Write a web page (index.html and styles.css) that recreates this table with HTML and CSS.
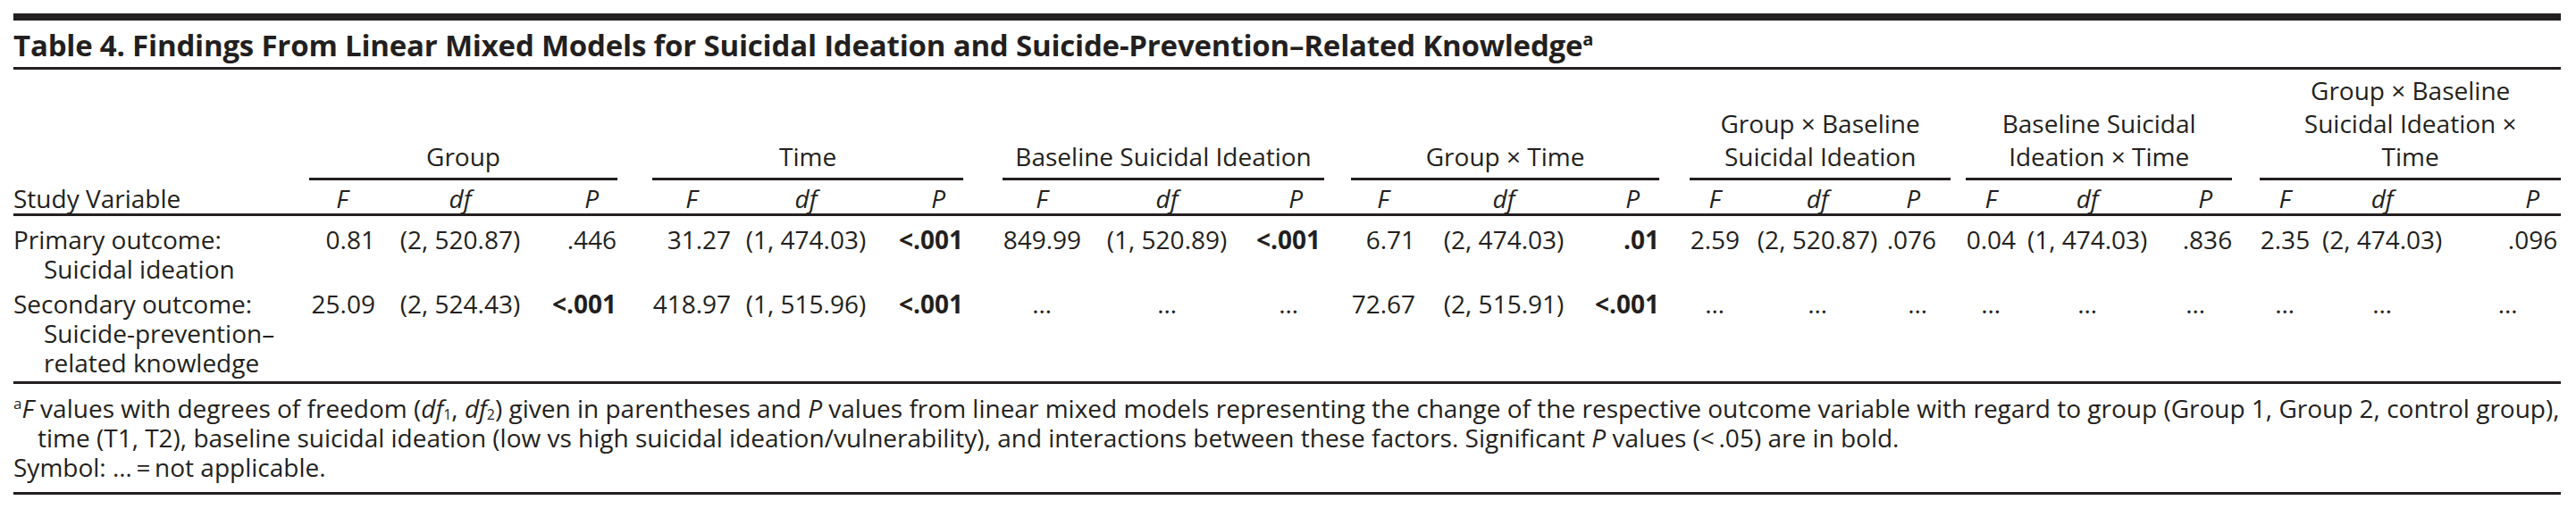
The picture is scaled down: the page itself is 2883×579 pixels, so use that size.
FILE: index.html
```html
<!DOCTYPE html>
<html lang="en">
<head>
<meta charset="utf-8">
<title>Table 4</title>
<link rel="stylesheet" href="styles.css">
</head>
<body>
<div class="table-wrap">
  <div class="topbar"></div>
  <h1 class="title">Table 4. Findings From Linear Mixed Models for Suicidal Ideation and Suicide-Prevention–Related Knowledge<sup>a</sup></h1>
  <table class="data">
    <colgroup>
      <col class="c-var">
      <col class="c-f1"><col class="c-d1"><col class="c-p1"><col class="c-g1">
      <col class="c-f2"><col class="c-d2"><col class="c-p2"><col class="c-g2">
      <col class="c-f3"><col class="c-d3"><col class="c-p3"><col class="c-g3">
      <col class="c-f4"><col class="c-d4"><col class="c-p4"><col class="c-g4">
      <col class="c-f5"><col class="c-d5"><col class="c-p5"><col class="c-g5">
      <col class="c-f6"><col class="c-d6"><col class="c-p6"><col class="c-g6">
      <col class="c-f7"><col class="c-d7"><col class="c-p7">
    </colgroup>
    <thead>
      <tr class="grp-row">
        <th class="var-h"></th>
        <th colspan="3" class="grp"><div class="grp-in">Group</div></th><th class="sp"></th>
        <th colspan="3" class="grp"><div class="grp-in">Time</div></th><th class="sp"></th>
        <th colspan="3" class="grp"><div class="grp-in">Baseline Suicidal Ideation</div></th><th class="sp"></th>
        <th colspan="3" class="grp"><div class="grp-in">Group × Time</div></th><th class="sp"></th>
        <th colspan="3" class="grp"><div class="grp-in">Group × Baseline<br>Suicidal Ideation</div></th><th class="sp"></th>
        <th colspan="3" class="grp"><div class="grp-in">Baseline Suicidal<br>Ideation × Time</div></th><th class="sp"></th>
        <th colspan="3" class="grp"><div class="grp-in">Group × Baseline<br>Suicidal Ideation ×<br>Time</div></th>
      </tr>
      <tr class="sub-row">
        <th class="var-h">Study Variable</th>
        <th><i>F</i></th><th><i>df</i></th><th class="ph ph1"><i>P</i></th><th class="sp"></th>
        <th><i>F</i></th><th><i>df</i></th><th class="ph ph2"><i>P</i></th><th class="sp"></th>
        <th><i>F</i></th><th><i>df</i></th><th class="ph ph3"><i>P</i></th><th class="sp"></th>
        <th><i>F</i></th><th><i>df</i></th><th class="ph ph4"><i>P</i></th><th class="sp"></th>
        <th><i>F</i></th><th class="dh5"><i>df</i></th><th class="ph ph5"><i>P</i></th><th class="sp"></th>
        <th><i>F</i></th><th><i>df</i></th><th class="ph ph6"><i>P</i></th><th class="sp"></th>
        <th><i>F</i></th><th><i>df</i></th><th class="ph ph7"><i>P</i></th>
      </tr>
    </thead>
    <tbody>
      <tr class="r1">
        <td class="var"><span class="lead">Primary outcome:</span><span class="sub">Suicidal ideation</span></td>
        <td class="f">0.81</td><td class="d">(2, 520.87)</td><td class="p p1">.446</td><td class="sp"></td>
        <td class="f">31.27</td><td class="d">(1, 474.03)</td><td class="p p2"><b>&lt;.001</b></td><td class="sp"></td>
        <td class="f">849.99</td><td class="d">(1, 520.89)</td><td class="p p3"><b>&lt;.001</b></td><td class="sp"></td>
        <td class="f">6.71</td><td class="d">(2, 474.03)</td><td class="p p4"><b>.01</b></td><td class="sp"></td>
        <td class="f">2.59</td><td class="d d5">(2, 520.87)</td><td class="p p5">.076</td><td class="sp"></td>
        <td class="f">0.04</td><td class="d">(1, 474.03)</td><td class="p p6">.836</td><td class="sp"></td>
        <td class="f">2.35</td><td class="d">(2, 474.03)</td><td class="p p7">.096</td>
      </tr>
      <tr class="r2">
        <td class="var"><span class="lead">Secondary outcome:</span><span class="sub">Suicide-prevention–</span><span class="sub">related knowledge</span></td>
        <td class="f">25.09</td><td class="d">(2, 524.43)</td><td class="p p1"><b>&lt;.001</b></td><td class="sp"></td>
        <td class="f">418.97</td><td class="d">(1, 515.96)</td><td class="p p2"><b>&lt;.001</b></td><td class="sp"></td>
        <td class="na">…</td><td class="na">…</td><td class="na">…</td><td class="sp"></td>
        <td class="f">72.67</td><td class="d">(2, 515.91)</td><td class="p p4"><b>&lt;.001</b></td><td class="sp"></td>
        <td class="na">…</td><td class="na d5">…</td><td class="na">…</td><td class="sp"></td>
        <td class="na">…</td><td class="na">…</td><td class="na">…</td><td class="sp"></td>
        <td class="na">…</td><td class="na">…</td><td class="na">…</td>
      </tr>
    </tbody>
  </table>
  <div class="notes">
    <p class="fn"><sup>a</sup><i>F</i> values with degrees of freedom (<i>df</i><sub>1</sub>, <i>df</i><sub>2</sub>) given in parentheses and <i>P</i> values from linear mixed models representing the change of the respective outcome variable with regard to group (Group 1, Group 2, control group),<br>time (T1, T2), baseline suicidal ideation (low vs high suicidal ideation/vulnerability), and interactions between these factors. Significant <i>P</i> values (&lt;&#8201;.05) are in bold.</p>
    <p class="sym">Symbol: …&#8201;=&#8201;not applicable.</p>
  </div>
</div>
</body>
</html>
```
FILE: styles.css
```css
html, body {
  margin: 0;
  padding: 0;
  background: #ffffff;
}
body {
  font-family: "Open Sans", "Noto Sans", "Liberation Sans", sans-serif;
  font-size: 28px;
  line-height: 33px;
  color: #231f20;
}
.table-wrap {
  width: 2851px;
  margin: 15px 0 0 15px;
}
.topbar {
  height: 8px;
  background: #231f20;
}
.title {
  margin: 0;
  padding: 9px 0 6px;
  font-size: 33px;
  line-height: 37px;
  font-weight: 700;
  letter-spacing: -0.2px;
  border-bottom: 3px solid #231f20;
}
.title sup {
  font-size: 20px;
  line-height: 0;
  font-weight: 700;
}
.data {
  width: 100%;
  table-layout: fixed;
  border-collapse: collapse;
  border-spacing: 0;
  border-bottom: 3px solid #231f20;
}
.c-var { width: 331px; }
.c-f1 { width: 74px; } .c-d1 { width: 190px; } .c-p1 { width: 81px; }  .c-g1 { width: 39px; }
.c-f2 { width: 88px; } .c-d2 { width: 168px; } .c-p2 { width: 92px; }  .c-g2 { width: 44px; }
.c-f3 { width: 88px; } .c-d3 { width: 192px; } .c-p3 { width: 80px; }  .c-g3 { width: 30px; }
.c-f4 { width: 72px; } .c-d4 { width: 198px; } .c-p4 { width: 75px; }  .c-g4 { width: 34px; }
.c-f5 { width: 56px; } .c-d5 { width: 162px; } .c-p5 { width: 74px; }  .c-g5 { width: 17px; }
.c-f6 { width: 56px; } .c-d6 { width: 160px; } .c-p6 { width: 82px; }  .c-g6 { width: 31px; }
.c-f7 { width: 56px; } .c-d7 { width: 162px; } .c-p7 { width: 119px; }

th, td {
  padding: 0;
  font-weight: normal;
  white-space: nowrap;
}
.grp-row th {
  vertical-align: bottom;
  text-align: center;
  padding-top: 5px;
}
.grp-in {
  border-bottom: 3px solid #231f20;
  padding-bottom: 5px;
  line-height: 37px;
}
.sub-row th {
  text-align: center;
  padding: 4px 0 0;
  border-bottom: 3px solid #231f20;
}
.sub-row th.var-h {
  text-align: left;
}
.sub-row th.ph {
  text-align: right;
}
.sub-row th.ph1 { padding-right: 21px; }
.sub-row th.ph2 { padding-right: 20px; }
.sub-row th.ph3 { padding-right: 24px; }
.sub-row th.ph4 { padding-right: 22px; }
.sub-row th.ph5 { padding-right: 34px; }
.sub-row th.ph6 { padding-right: 22px; }
.sub-row th.ph7 { padding-right: 24px; }
.sub-row th.dh5 { padding-left: 12px; }
tbody td {
  vertical-align: top;
  padding: 6px 0 0;
}
tbody tr.r1 td {
  padding-top: 10px;
}
tbody tr.r2 td {
  padding-bottom: 4px;
}
td.var {
  text-align: left;
}
td.var span {
  display: block;
}
td.var .sub {
  padding-left: 34px;
}
td.f {
  text-align: right;
}
td.d {
  text-align: center;
}
td.d5 {
  padding-left: 12px;
}
td.p {
  text-align: right;
}
td.p1 { padding-right: 1px; }
td.p3 { padding-right: 4px; }
td.p5 { padding-right: 16px; }
td.p7 { padding-right: 4px; }
td.na {
  text-align: center;
}
b {
  font-weight: 700;
}
.notes {
  padding: 11px 0 11px;
  border-bottom: 3px solid #231f20;
}
.notes p {
  margin: 0;
}
.fn {
  padding-left: 27px;
  text-indent: -27px;
}
.fn sup {
  font-size: 17px;
  line-height: 0;
}
.fn sub {
  font-size: 16px;
  line-height: 0;
  vertical-align: -2px;
}
```
